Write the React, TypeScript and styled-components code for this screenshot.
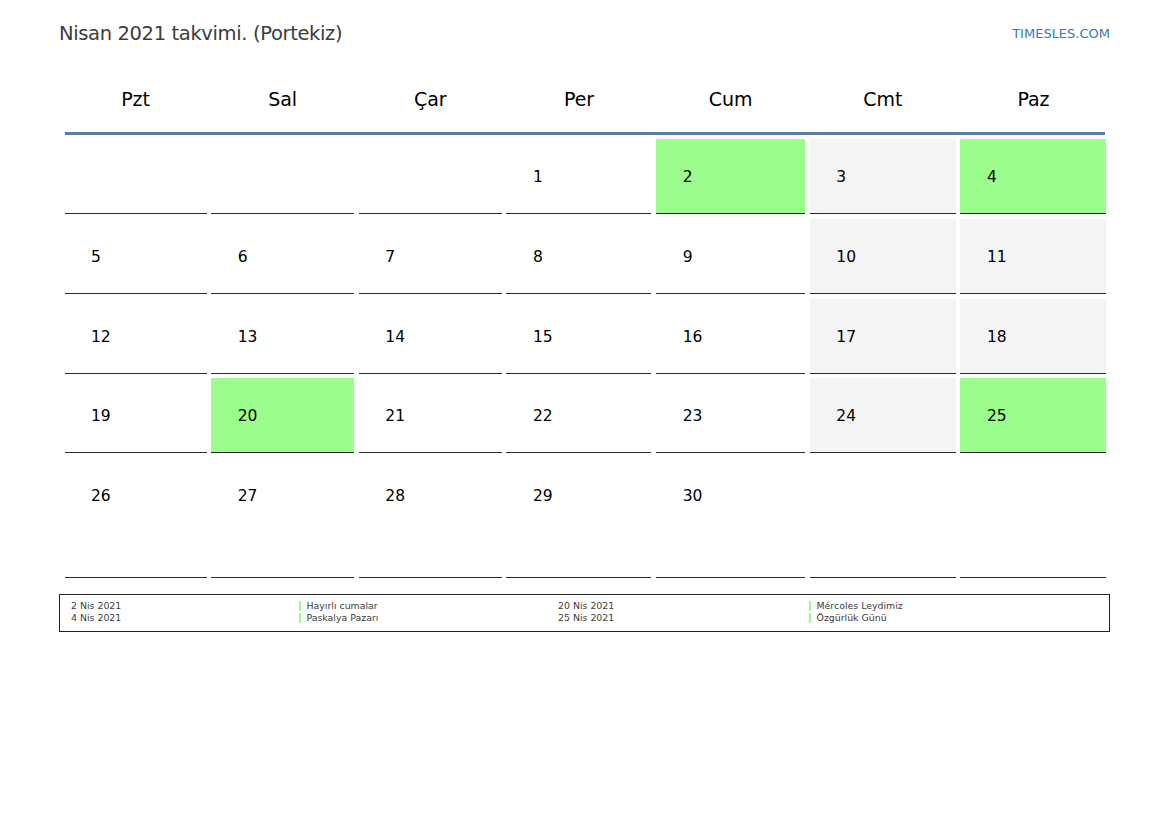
import React from 'react';
import styled, {createGlobalStyle} from 'styled-components';

const GlobalStyle = createGlobalStyle`
    html, body {
        margin: 0;
        background: #fff;
        font-family: "DejaVu Sans", sans-serif;
    }
`

const weekDays = ["Pzt", "Sal", "Çar", "Per", "Cum", "Cmt", "Paz"]

type Kind = "plain" | "weekend" | "holiday"

const holidays = [2, 4, 20, 25]
const leading = 3
const cells: (number | null)[] = [
    ...Array(leading).fill(null),
    ...Array.from({length: 30}, (_, i) => i + 1),
    null, null,
]

const kindOf = (day: number | null, index: number): Kind => {
    if (day !== null && holidays.includes(day)) return "holiday"
    if (day !== null && index % 7 >= 5) return "weekend"
    return "plain"
}

const legend = [
    [{date: "2 Nis 2021", name: "Hayırlı cumalar"}, {date: "4 Nis 2021", name: "Paskalya Pazarı"}],
    [{date: "20 Nis 2021", name: "Mércoles Leydimiz"}, {date: "25 Nis 2021", name: "Özgürlük Günü"}],
]

function App() {
    return (
        <Page>
            <GlobalStyle/>
            <Header>
                <Title>Nisan 2021 takvimi. (Portekiz)</Title>
                <SiteLink>TIMESLES.COM</SiteLink>
            </Header>
            <WeekHeader>
                {weekDays.map(day => <WeekDay key={day}>{day}</WeekDay>)}
            </WeekHeader>
            <Days>
                {cells.map((day, index) => (
                    <Day key={index} $kind={kindOf(day, index)}>{day}</Day>
                ))}
            </Days>
            <Legend>
                {legend.map((column, index) => (
                    <LegendColumn key={index} $second={index === 1}>
                        <LegendDates>
                            {column.map(item => <LegendLine key={item.date}>{item.date}</LegendLine>)}
                        </LegendDates>
                        <LegendNames>
                            {column.map(item => <LegendName key={item.name}>{item.name}</LegendName>)}
                        </LegendNames>
                    </LegendColumn>
                ))}
            </Legend>
        </Page>
    );
}

const columns = "142px 143px 143px 145px 149px 146px 146px"

const Page = styled.div`
    width: 1169px;
    height: 827px;
    box-sizing: border-box;
    padding: 20px 59px 0;
    overflow: hidden;
`

const Header = styled.div`
    display: flex;
    justify-content: space-between;
    align-items: center;
    height: 26px;
`

const Title = styled.div`
    font-size: 19.5px;
    letter-spacing: -0.36px;
    color: #3c3c3c;
`

const SiteLink = styled.div`
    font-size: 13px;
    color: #337ab7;
`

const WeekHeader = styled.div`
    display: grid;
    grid-template-columns: ${columns};
    column-gap: 4.67px;
    margin: 20px 5px 0 5.5px;
    height: 66px;
    align-items: center;
    border-bottom: 3px solid #5b7ba6;
`

const WeekDay = styled.div`
    font-size: 19px;
    letter-spacing: -0.1px;
    color: #000;
    text-align: center;
`

const Days = styled.div`
    display: grid;
    grid-template-columns: ${columns};
    grid-auto-rows: 75px;
    column-gap: 4.67px;
    row-gap: 4.75px;
    margin: 4px 5px 0 5.5px;

    & > :nth-child(n + 29) {
        height: 120px;
    }
`

const dayColors: Record<Kind, string> = {
    plain: "transparent",
    weekend: "#f4f4f4",
    holiday: "#9bfd8b",
}

const Day = styled.div<{ $kind: Kind }>`
    box-sizing: border-box;
    padding: 28px 0 0 26.5px;
    font-size: 15.5px;
    line-height: 20px;
    color: #000;
    background: ${props => dayColors[props.$kind]};
    border-bottom: 1px solid #2a2a2a;
`

const Legend = styled.div`
    display: grid;
    grid-template-columns: 487px 1fr;
    box-sizing: border-box;
    height: 38px;
    margin-top: 61px;
    padding: 6px 0 0 11px;
    border: 1px solid #222;
`

const LegendColumn = styled.div<{ $second: boolean }>`
    display: grid;
    grid-template-columns: ${props => props.$second ? "251px" : "228px"} 1fr;
`

const LegendDates = styled.div``

const LegendNames = styled.div``

const LegendLine = styled.div`
    font-size: 9.4px;
    line-height: 10px;
    margin-bottom: 2px;
    color: #3c3c3c;
`

const LegendName = styled(LegendLine)`
    padding-left: 5.5px;
    border-left: 2.5px solid #9bfd8b;
`

export default App;
